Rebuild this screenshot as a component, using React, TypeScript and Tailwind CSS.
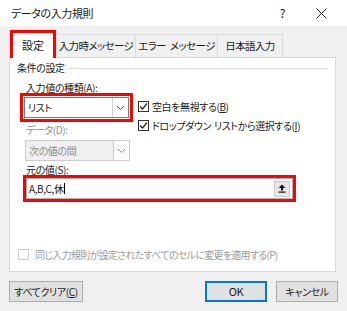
const font = "font-['Noto_Sans_CJK_JP','Noto_Sans',sans-serif] [font-feature-settings:'palt']";

function Check({ on = true, disabled = false }: { on?: boolean; disabled?: boolean }) {
  return (
    <div
      className={`w-[11px] h-[11px] shrink-0 border flex items-center justify-center bg-white ${
        disabled ? "border-[#cccccc]" : "border-[#333333]"
      }`}
    >
      {on && (
        <svg width="9" height="9" viewBox="0 0 9 9">
          <path d="M1 4.5 L3.5 7 L8 1.5" fill="none" stroke="#222" strokeWidth="1.2" />
        </svg>
      )}
    </div>
  );
}

function Chevron({ color = "#555" }: { color?: string }) {
  return (
    <svg width="9" height="6" viewBox="0 0 9 6">
      <path d="M1 1 L4.5 4.5 L8 1" fill="none" stroke={color} strokeWidth="1" />
    </svg>
  );
}

export default function App() {
  return (
    <div className={`w-[347px] h-[311px] bg-[#f0f0f0] text-[10px] tracking-[-0.4px] whitespace-pre text-[#1a1a1a] overflow-hidden ${font}`}>
      {/* title bar */}
      <div className="h-[26px] bg-white flex items-center pl-[11px] pr-[20px]">
        <span className="text-[11px] leading-none">データの入力規則</span>
        <span className="ml-auto mr-[31px] text-[12px] leading-none">?</span>
        <svg width="11" height="11" viewBox="0 0 11 11">
          <path d="M0.5 0.5 L10.5 10.5 M10.5 0.5 L0.5 10.5" stroke="#222" strokeWidth="1" />
        </svg>
      </div>

      {/* tabs */}
      <div className="h-[31px] flex items-end pl-[10px] text-[10.5px] tracking-[-0.6px]">
        <div className="relative z-10 w-[46px] h-[28px] bg-white border-[3px] border-[#ff0000] border-b-0 flex items-center justify-center text-[11px] tracking-normal -mb-px">
          設定
        </div>
        <div className="w-[80px] h-[23px] border border-b-0 border-[#d9d9d9] flex items-center justify-center">
          入力時メッセージ
        </div>
        <div className="w-[82px] h-[23px] border border-b-0 border-l-0 border-[#d9d9d9] flex items-center justify-center">
          エラー<span className="w-[4px]" />メッセージ
        </div>
        <div className="w-[65px] h-[23px] border border-b-0 border-l-0 border-[#d9d9d9] flex items-center justify-center">
          日本語入力
        </div>
      </div>

      {/* panel */}
      <div className="ml-[9px] w-[327px] h-[215px] bg-white border border-[#d9d9d9] px-[7px] pt-[3px] flex flex-col">
        <div className="h-[14px] flex items-center gap-[4px]">
          <span className="leading-none">条件の設定</span>
          <div className="flex-1 h-px bg-[#dcdcdc]" />
        </div>

        <div className="mt-[6px] pl-[9px] h-[14px] flex items-center leading-none">入力値の種類(A):</div>

        <div className="flex items-start h-[29px] -mt-[2px] pl-[3px]">
          <div className="border-[3px] border-[#ff0000] p-px">
            <div className="w-[105px] h-[21px] border border-[#7a7a7a] bg-white flex items-center">
              <span className="pl-[3px] leading-none flex-1">リスト</span>
              <div className="w-[16px] h-full border-l border-[#d0d0d0] flex items-center justify-center">
                <Chevron />
              </div>
            </div>
          </div>
          <div className="ml-[5px] flex flex-col gap-[8px] pt-[8px]">
            <div className="flex items-center gap-[3px] leading-none">
              <Check />
              <span>
                空白を無視する(<span className="underline">B</span>)
              </span>
            </div>
            <div className="flex items-center gap-[3px] leading-none">
              <Check />
              <span className="flex items-center">
                ドロップダウン<span className="inline-block w-[3px]" />リストから選択する(<span className="underline">I</span>)
              </span>
            </div>
          </div>
        </div>

        <div className="mt-px pl-[9px] h-[14px] flex items-center leading-none text-[#8a8a8a]">データ(D):</div>
        <div className="mt-[3px] pl-[8px]">
          <div className="w-[105px] h-[21px] border border-[#cccccc] bg-[#f0f0f0] flex items-center text-[#8a8a8a]">
            <span className="pl-[3px] leading-none flex-1">次の値の間</span>
            <div className="w-[16px] h-full bg-white border-l border-[#cccccc] flex items-center justify-center">
              <Chevron color="#888" />
            </div>
          </div>
        </div>

        <div className="mt-[2px] pl-[9px] h-[14px] flex items-center leading-none">元の値(S):</div>
        <div className="mt-[-2px] pl-[6px]">
          <div className="w-[273px] border-[3px] border-[#ff0000]">
            <div className="h-[21px] border border-[#b0b0b0] bg-white flex items-center pr-[2px]">
              <span className="pl-[2px] leading-none flex-1 flex items-center">
                A,B,C,休<span className="inline-block w-px h-[11px] bg-black" />
              </span>
              <div className="w-[16px] h-[16px] bg-[#e6e6e6] border border-[#c8c8c8] flex items-center justify-center">
                <svg width="8" height="9" viewBox="0 0 8 9">
                  <path d="M4 0.5 L7.5 4 L5 4 L5 6.5 L3 6.5 L3 4 L0.5 4 Z" fill="#111" />
                  <rect x="0.5" y="7.5" width="7" height="1.2" fill="#111" />
                </svg>
              </div>
            </div>
          </div>
        </div>

        <div className="mt-auto mb-[11px] pl-[1px] flex items-center gap-[6px] leading-none text-[#9a9a9a] tracking-[-0.7px]">
          <Check on={false} disabled />
          <span>同じ入力規則が設定されたすべてのセルに変更を適用する(P)</span>
        </div>
      </div>

      {/* buttons */}
      <div className="mt-[9px] px-[9px] flex items-center">
        <button className="w-[74px] h-[21px] bg-[#e1e1e1] border border-[#adadad] flex items-center justify-center leading-none">
          <span>
            すべてクリア(<span className="underline">C</span>)
          </span>
        </button>
        <button className="ml-auto w-[62px] h-[21px] bg-[#e1e1e1] border-2 border-[#0078d7] flex items-center justify-center leading-none text-[11px]">
          OK
        </button>
        <button className="ml-[9px] w-[62px] h-[21px] bg-[#e1e1e1] border border-[#adadad] flex items-center justify-center leading-none">
          キャンセル
        </button>
      </div>
    </div>
  );
}
